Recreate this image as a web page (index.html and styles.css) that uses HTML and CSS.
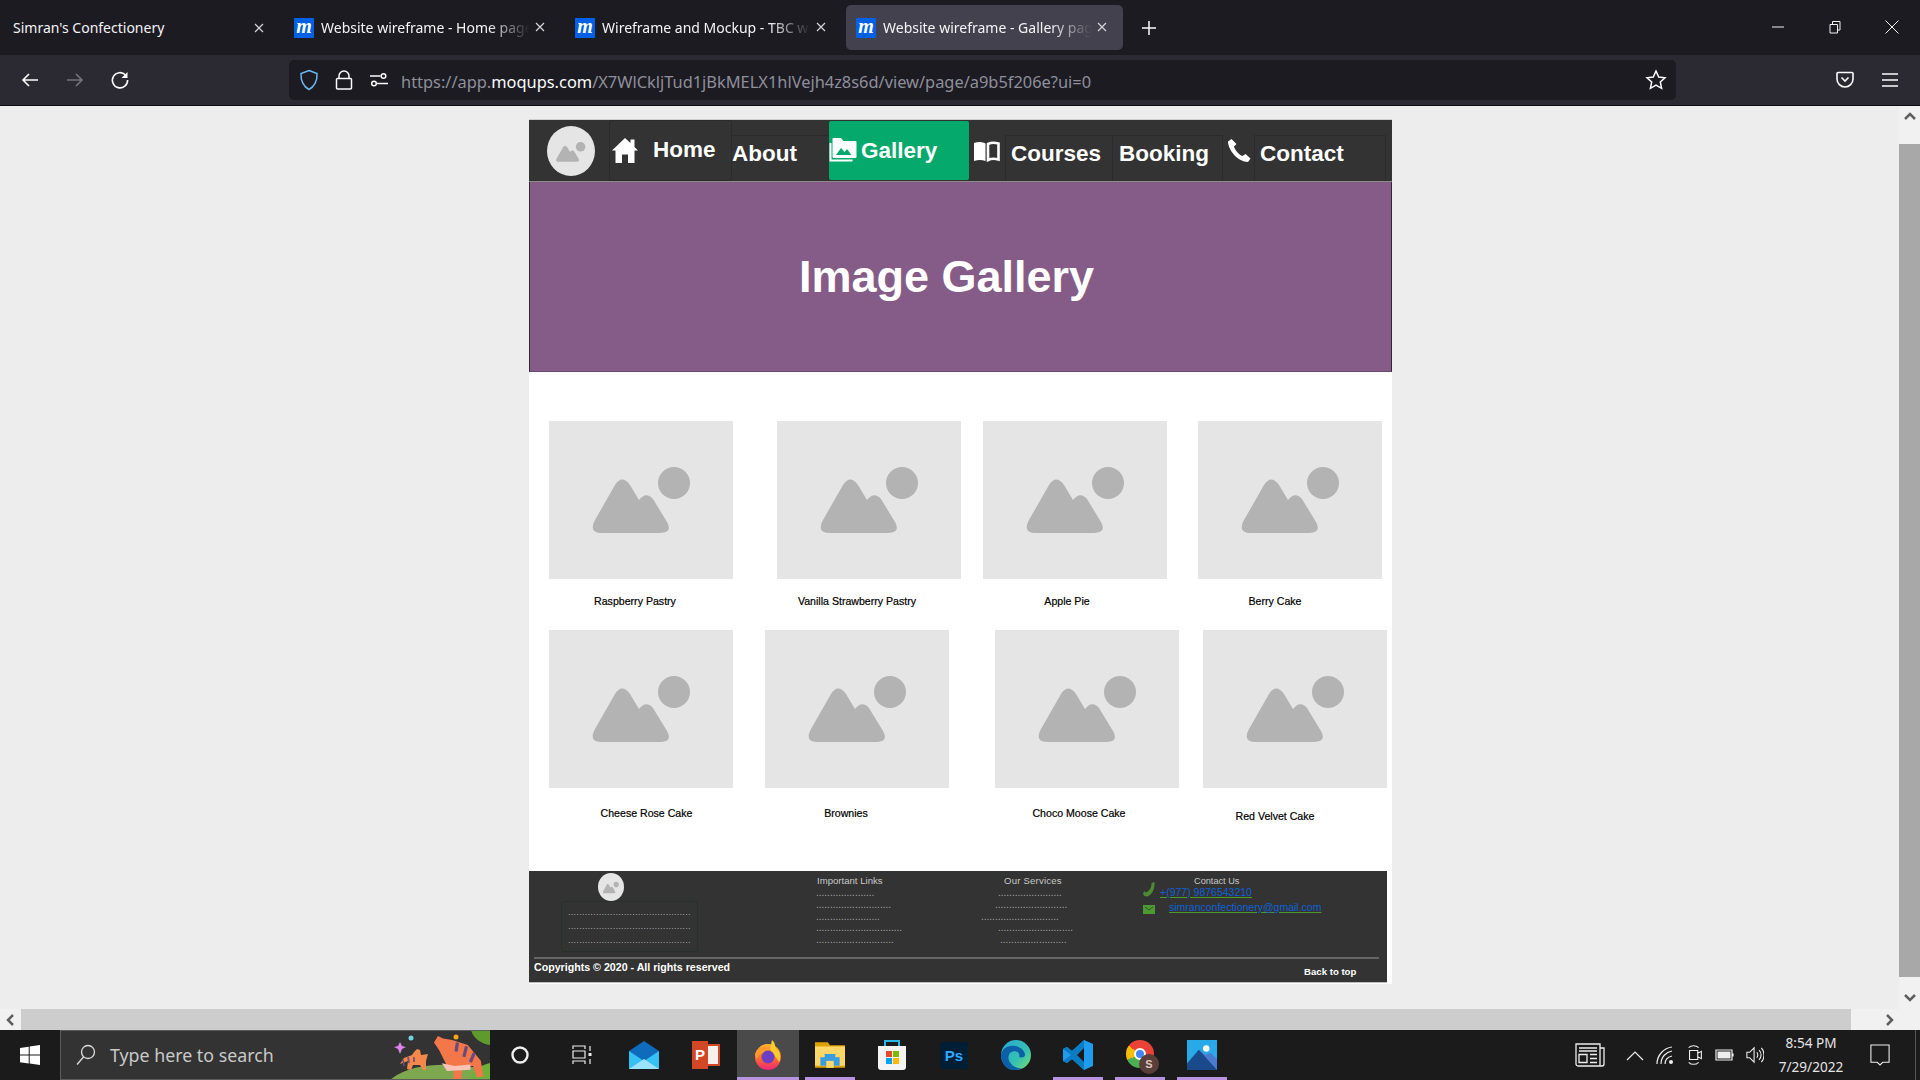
FILE: index.html
```html
<!DOCTYPE html>
<html lang="en">
<head>
<meta charset="utf-8">
<title>Website wireframe - Gallery page</title>
<link rel="stylesheet" href="styles.css">
</head>
<body>
<svg class="defs" width="0" height="0" aria-hidden="true">
  <defs>
    <g id="ph">
      <path d="M53 112Q39 112 46 99L66 64Q73 53 81 64L90 79Q97 70 104 78L118 101Q124 112 111 112Z" fill="#b3b3b3"/>
      <circle cx="125" cy="62" r="16" fill="#b3b3b3"/>
    </g>
    <linearGradient id="edgeG" x1="0" y1="0" x2="1" y2="1"><stop offset="0" stop-color="#2aa7d8"/><stop offset=".6" stop-color="#35c1b0"/><stop offset="1" stop-color="#7fe06a"/></linearGradient>
    <linearGradient id="ffG" x1="0" y1="0" x2="0" y2="1"><stop offset="0" stop-color="#ffb62e"/><stop offset=".55" stop-color="#ff6a2b"/><stop offset="1" stop-color="#f0247c"/></linearGradient>
  </defs>
</svg>

<header class="tabs">
  <div class="tab tab-first">
    <span class="tab-title">Simran's Confectionery</span>
    <svg class="tab-x" viewBox="0 0 12 12"><path d="M2 2l8 8M10 2l-8 8"/></svg>
  </div>
  <div class="tab tab-second">
    <span class="fav">m</span>
    <span class="tab-title fade">Website wireframe - Home page</span>
    <svg class="tab-x" viewBox="0 0 12 12"><path d="M2 2l8 8M10 2l-8 8"/></svg>
  </div>
  <div class="tab tab-third">
    <span class="fav">m</span>
    <span class="tab-title fade">Wireframe and Mockup - TBC wireframe</span>
    <svg class="tab-x" viewBox="0 0 12 12"><path d="M2 2l8 8M10 2l-8 8"/></svg>
  </div>
  <div class="tab tab-active">
    <span class="fav">m</span>
    <span class="tab-title fade">Website wireframe - Gallery page</span>
    <svg class="tab-x" viewBox="0 0 12 12"><path d="M2 2l8 8M10 2l-8 8"/></svg>
  </div>
  <svg class="tab-plus" viewBox="0 0 16 16"><path d="M8 1v14M1 8h14"/></svg>
  <div class="win">
    <svg class="win-i" viewBox="0 0 14 14"><path d="M1 7h12"/></svg>
    <svg class="win-i" viewBox="0 0 14 14"><path d="M2 4.500h7.500V13H2zM4.500 4.500V1.500H12V10H9.500"/></svg>
    <svg class="win-i" viewBox="0 0 14 14"><path d="M0.500 0.500l13 13M13.500 0.500l-13 13"/></svg>
  </div>
</header>

<nav class="toolbar">
  <svg class="tb tb-first" viewBox="0 0 20 20"><path d="M18 10H3M9 4l-6 6 6 6"/></svg>
  <svg class="tb tb-dim" viewBox="0 0 20 20"><path d="M2 10h15M11 4l6 6-6 6"/></svg>
  <svg class="tb" viewBox="0 0 20 20"><path d="M15.500 5A7.600 7.600 0 1 0 17.600 10"/><path class="solid" d="M17.500 2v6h-6z"/></svg>
  <div class="urlbar">
    <svg class="ub" viewBox="0 0 20 22"><path class="shield" d="M10 1.500L18 4.500C18.500 12 15 18 10 20.500 5 18 1.500 12 2 4.500Z"/></svg>
    <svg class="ub" viewBox="0 0 20 22"><path d="M5 9.500V7a5 5 0 0 1 10 0v2.500M3.500 9.500h13a1 1 0 0 1 1 1V19a1 1 0 0 1-1 1h-13a1 1 0 0 1-1-1v-8.500a1 1 0 0 1 1-1z"/></svg>
    <svg class="ub" viewBox="0 0 20 22"><circle cx="14.500" cy="7" r="2.300"/><circle cx="5" cy="14.500" r="2.300"/><path d="M1 7h10.500M8 14.500h11"/></svg>
    <div class="url">https://app.<b>moqups.com</b>/X7WlCkljTud1jBkMELX1hlVejh4z8s6d/view/page/a9b5f206e?ui=0</div>
    <svg class="star" viewBox="0 0 22 22"><path d="M11 2l2.700 6 6.300.7-4.700 4.300 1.300 6.400L11 16.200 5.400 19.400l1.300-6.400L2 8.700 8.300 8z"/></svg>
  </div>
  <svg class="tb tb-pocket" viewBox="0 0 20 20"><path d="M3 2.500h14a1 1 0 0 1 1 1V9a8 8 0 0 1-16 0V3.500a1 1 0 0 1 1-1z"/><path d="M6.500 7.500L10 11l3.500-3.500"/></svg>
  <svg class="tb tb-menu" viewBox="0 0 20 20"><path d="M2 4h16M2 10h16M2 16h16"/></svg>
</nav>

<main class="view">
  <div class="view-main">
    <div class="stage">
      <div class="page">
        <div class="sitenav">
          <div class="logo">
            <svg class="logo-svg" viewBox="13 -4 160 160"><use href="#ph"/></svg>
          </div>
          <div class="ni ni-home">
            <svg class="ic ic-home" viewBox="0 0 26 25"><path d="M13 0L0 12.500h3.500V25h6.500v-8.500h6V25h6.500V12.500H26l-3.500-3.500V1.500h-4v3.500z"/></svg>
            <span class="nt">Home</span>
          </div>
          <div class="ni ni-about"><span class="nt">About</span></div>
          <div class="ni ni-gallery">
            <svg class="ic ic-gal" viewBox="0 0 28 26"><path class="ol" d="M1.500 6v17.500h22"/><path d="M4.500 1h7.500l2.500 3h12a1 1 0 0 1 1 1v15a1 1 0 0 1-1 1H4.500a1 1 0 0 1-1-1V2a1 1 0 0 1 1-1z"/><path class="cut" d="M7 18l5-7 3.500 4 2.500-3 4.500 6z"/></svg>
            <span class="nt">Gallery</span>
          </div>
          <div class="ni ni-bookslot">
            <svg class="ic ic-book" viewBox="0 0 27 21"><path d="M1 2C5 .5 9 .5 12.500 2.500V20C9 18.500 5 18.500 1 20z"/><path class="ol ol-thick" d="M15 3C18 1.500 22 1.500 25.500 2.500v16c-3.500-1-7.500-1-10.500.5z"/></svg>
          </div>
          <div class="ni ni-courses"><span class="nt">Courses</span></div>
          <div class="ni ni-booking"><span class="nt">Booking</span></div>
          <div class="ni ni-phoneslot">
            <svg class="ic ic-phone" viewBox="0 0 24 25"><path d="M4.500 1L1 3.500C1 12 11 24 21 24l2.500-3.500-5-4.500-3 2C12 17 7.500 11.500 7 8.500l2.500-2.500z"/></svg>
          </div>
          <div class="ni ni-contact"><span class="nt">Contact</span></div>
        </div>

        <section class="banner"><h1>Image Gallery</h1></section>

        <section class="gallery">
          <div class="row row-a">
            <figure class="card">
              <svg class="pic" viewBox="0 0 184 158"><use href="#ph"/></svg>
              <figcaption class="cap cap-1">Raspberry Pastry</figcaption>
            </figure>
            <figure class="card g44">
              <svg class="pic" viewBox="0 0 184 158"><use href="#ph"/></svg>
              <figcaption class="cap cap-2">Vanilla Strawberry Pastry</figcaption>
            </figure>
            <figure class="card g22">
              <svg class="pic" viewBox="0 0 184 158"><use href="#ph"/></svg>
              <figcaption class="cap cap-3">Apple Pie</figcaption>
            </figure>
            <figure class="card g31">
              <svg class="pic" viewBox="0 0 184 158"><use href="#ph"/></svg>
              <figcaption class="cap cap-4">Berry Cake</figcaption>
            </figure>
          </div>
          <div class="row row-b">
            <figure class="card">
              <svg class="pic" viewBox="0 0 184 158"><use href="#ph"/></svg>
              <figcaption class="cap cap-5">Cheese Rose Cake</figcaption>
            </figure>
            <figure class="card g32">
              <svg class="pic" viewBox="0 0 184 158"><use href="#ph"/></svg>
              <figcaption class="cap cap-6">Brownies</figcaption>
            </figure>
            <figure class="card g46">
              <svg class="pic" viewBox="0 0 184 158"><use href="#ph"/></svg>
              <figcaption class="cap cap-7">Choco Moose Cake</figcaption>
            </figure>
            <figure class="card g24">
              <svg class="pic" viewBox="0 0 184 158"><use href="#ph"/></svg>
              <figcaption class="cap cap-8">Red Velvet Cake</figcaption>
            </figure>
          </div>
        </section>

        <footer class="foot">
          <div class="foot-top">
            <div class="f-brand">
              <svg class="f-logo" viewBox="13 -4 160 160" preserveAspectRatio="none"><use href="#ph"/></svg>
              <div class="f-box">
                <div class="dots">............................................</div>
                <div class="dots">............................................</div>
                <div class="dots">............................................</div>
              </div>
            </div>
            <div class="f-links">
              <div class="f-title t-links">Important Links</div>
              <div class="dl">.....................</div>
              <div class="dl">...........................</div>
              <div class="dl">.......................</div>
              <div class="dl">...............................</div>
              <div class="dl">............................</div>
            </div>
            <div class="f-services">
              <div class="f-title t-serv">Our Services</div>
              <div class="dl s1">.......................</div>
              <div class="dl s2">..........................</div>
              <div class="dl">............................</div>
              <div class="dl s1">...........................</div>
              <div class="dl s3">........................</div>
            </div>
            <div class="f-contact">
              <div class="f-title t-cont">Contact Us</div>
              <div class="c-row">
                <svg class="c-phone" viewBox="0 0 12 15"><path d="M11.500 0L8.500 1C9 5 6 10 2.500 10.500L1 9 0 12.500C2 15 5 15 7.500 12.500 10.500 9.500 12 5 11.500 0z"/></svg>
                <a class="c-link l-tel" href="#">+(977) 9876543210</a>
              </div>
              <div class="c-row">
                <svg class="c-mail" viewBox="0 0 12 9"><path d="M0 0h12v9H0z"/><path class="flap" d="M2 2l4 3 4-3"/></svg>
                <a class="c-link l-mail" href="#">simranconfectionery@gmail.com</a>
              </div>
            </div>
          </div>
          <div class="foot-hr"></div>
          <div class="foot-bottom">
            <span class="copy">Copyrights © 2020 - All rights reserved</span>
            <a class="back" href="#">Back to top</a>
          </div>
        </footer>
      </div>
    </div>
    <aside class="vscroll">
      <svg class="sa sa-up" viewBox="0 0 12 8"><path d="M1 7l5-5 5 5"/></svg>
      <div class="vthumb"></div>
      <svg class="sa sa-down" viewBox="0 0 12 8"><path d="M1 1l5 5 5-5"/></svg>
    </aside>
  </div>
  <div class="hscroll">
    <svg class="sb" viewBox="0 0 8 12"><path d="M7 1L2 6l5 5"/></svg>
    <div class="hthumb"></div>
    <svg class="sb" viewBox="0 0 8 12"><path d="M1 1l5 5-5 5"/></svg>
  </div>
</main>

<footer class="taskbar">
  <div class="start">
    <svg class="winlogo" viewBox="0 0 20 20"><path d="M0 2.900L8.700 1.700v7.900H0zM9.700 1.500L20 0v9.600H9.700zM0 10.500h8.700v7.900L0 17.200zM9.700 10.500H20V20L9.700 18.600z"/></svg>
  </div>
  <div class="search">
    <svg class="mag" viewBox="0 0 20 22"><circle cx="12" cy="8" r="6.500"/><path d="M7.500 13L1 20.500"/></svg>
    <span class="search-t">Type here to search</span>
    <svg class="tiger" viewBox="0 0 100 50">
      <path d="M0 50C15 37 40 34 62 35 80 36 92 38 100 42V50Z" fill="#7ea84f"/>
      <path d="M81 0h19v15C91 14 83 8 81 0z" fill="#5f9a2c"/>
      <path d="M80 50c0-8 8-14 20-17v17z" fill="#6fb03a"/>
      <path d="M10 12l2 4 4 1-4 2-2 5-2-5-4-2 4-1z" fill="#dd83ee"/>
      <circle cx="21" cy="8" r="2.500" fill="#6fd5dc"/>
      <circle cx="66" cy="7" r="2.500" fill="#f5a90a"/>
      <g transform="translate(44 6) scale(1.300) translate(-44 -9)">
        <path d="M44 14l3-5 4 2 7 1 12 4 10 12 2 12-5 1-3-9-8 0-1 10-6 0 0-8-5-2-6-12z" fill="#f4774a"/>
        <path d="M62 14l-1 7M69 17l-2 8M75 22l-3 7" stroke="#6a4b7e" stroke-width="2.500" fill="none"/>
        <path d="M50 30l10 2 12-1 0 4-18 1z" fill="#f9c4b5"/>
      </g>
      <path d="M24 22l3-3 3 1 1 5 7-1-2 7 0 9-3 0-3-5-7 0-2 5-4-1 1-8-8 3 4-6 8-3z" fill="#f4874a"/>
      <path d="M13 30l1 6M18 27l1 6M24 27l0 5" stroke="#6a4b7e" stroke-width="1.600" fill="none"/>
    </svg>
  </div>
  <div class="slot slot-cortana"><svg class="t-i" viewBox="0 0 20 20"><circle class="thick" cx="10" cy="10" r="7.500"/></svg></div>
  <div class="slot slot-task"><svg class="t-i" viewBox="0 0 20 20"><path d="M1 4V1h12v3M1 6h12v7H1zM1 19v-3h12v3M18 1v5M18 14v5"/><path class="solid" d="M16.500 8h3v3h-3z"/></svg></div>
  <div class="slot">
    <svg class="t-c" viewBox="0 0 30 28"><path d="M15 0L30 10V28H0V10z" fill="#0f6cbd"/><path d="M0 10L15 20 30 10V28H0z" fill="#37c0f5"/><path d="M0 28L15 18 30 28z" fill="#9be3fa"/></svg>
  </div>
  <div class="slot">
    <div class="ppt"><span class="ppt-page"></span><span class="ppt-p">P</span></div>
  </div>
  <div class="slot active full">
    <svg class="t-c" viewBox="0 0 30 30"><circle cx="15" cy="17" r="13" fill="url(#ffG)"/><path d="M19 0c4 3 2 6 5 9 4 4 4 10 2 13L17 9z" fill="#ffc92e"/><circle cx="15" cy="17" r="6.500" fill="#6b3fc4"/><path d="M2 15C3 9 10 5 18 8c-5 0-7 2-8 5-3 0-5 2-6 6z" fill="#ff9a2b"/></svg>
  </div>
  <div class="slot active">
    <svg class="t-c" viewBox="0 0 28 24"><path d="M0 0h12l2 3h14v21H0z" fill="#e0a100"/><path d="M0 4h28v18H0z" fill="#ffd766"/><path d="M5 22v-8h4v-3h10v3h4v8z" fill="#3a9de0"/><path d="M10.500 17.500h7V24h-7z" fill="#ffd766"/></svg>
  </div>
  <div class="slot">
    <svg class="t-c" viewBox="0 0 30 30"><path d="M1 6h28v21a3 3 0 0 1-3 3H4a3 3 0 0 1-3-3z" fill="#f4f4f4"/><path d="M8 6V1h14v5" fill="none" stroke="#29b6e8" stroke-width="2"/><path d="M9 11h6v6H9z" fill="#e8482c"/><path d="M16 11h6v6h-6z" fill="#7fba00"/><path d="M9 18h6v6H9z" fill="#00a4ef"/><path d="M16 18h6v6h-6z" fill="#ffb900"/></svg>
  </div>
  <div class="slot"><div class="ps">Ps</div></div>
  <div class="slot">
    <svg class="t-c" viewBox="0 0 30 30"><circle cx="15" cy="15" r="15" fill="url(#edgeG)"/><path d="M0 15C1 8 8 5 14 6c6 1 10 5 10 9 0 2-3 3-6 2 2-5-5-8-9-4-4 5 0 13 8 15 2 .5 3 .5 5 0-4 2-7 2-10 2C5 30 0 23 0 15z" fill="#0d5fa8"/></svg>
  </div>
  <div class="slot active">
    <svg class="t-c" viewBox="0 0 30 30"><path d="M21 0l9 4v22l-9 4-12-11-5 4-4-2V9l4-2 5 4z" fill="#1f9cf0"/><path d="M21 0v30L9 19l-5 4-4-2 8-6-8-6 4-2 5 4z" fill="#0a7cc4"/><path d="M21 8l-7 7 7 7z" fill="#1a1a1a"/></svg>
  </div>
  <div class="slot active">
    <div class="chrome"><span class="chrome-in"></span><span class="avatar">S</span></div>
  </div>
  <div class="slot active">
    <svg class="t-c" viewBox="0 0 28 28"><path d="M0 0h28v28H0z" fill="#29aae8"/><circle cx="18" cy="8" r="3" fill="#fff"/><path d="M0 22L11 9l17 15v4H0z" fill="#1a4a8c"/><path d="M11 9l6 5 5-2 6 6v10L11 9z" fill="#4a7bd0"/></svg>
  </div>
  <div class="tray">
    <svg class="tr tr-news" viewBox="0 0 30 24"><path d="M1 1h24v22H3a2 2 0 0 1-2-2zM25 5h4v16a2 2 0 0 1-2 2h-2M4 5h18M4 8h18M4 11.500h8v8H4zM15 11.500h7M15 15.500h7M15 19.500h7"/></svg>
    <div class="tr-slot"><svg class="tr" viewBox="0 0 18 12"><path d="M1 11l8-8 8 8"/></svg></div>
    <div class="tr-slot"><svg class="tr" viewBox="0 0 18 20"><path d="M1 19C1 10 8 3 16 2M5 19C5 12 10 7 16 6M9 19c0-4 3-7 7-8"/><circle class="solid" cx="15" cy="17" r="2"/></svg></div>
    <div class="tr-slot"><svg class="tr" viewBox="0 0 18 22"><path d="M3 6h9v10H3zM12 9l4-2v8l-4-2M2 3C5 0 10 0 13 3M2 19c3 3 8 3 11 0"/></svg></div>
    <div class="tr-slot"><svg class="tr tr-bat" viewBox="0 0 20 12"><path d="M1 1h16v10H1zM18 4.500v3"/><path class="solid" d="M2.500 2.500h13v7h-13z"/></svg></div>
    <div class="tr-slot"><svg class="tr" viewBox="0 0 20 20"><path d="M1 7h3l5-5v16l-5-5H1zM12 7c1.500 2 1.500 4 0 6M14.500 4.500c3 3 3 8 0 11M17 2c4 4 4 12 0 16"/></svg></div>
    <div class="clock"><span>8:54 PM</span><span>7/29/2022</span></div>
    <div class="notif"><svg class="tr tr-note" viewBox="0 0 22 24"><path d="M1 1h20v19h-7l-3 3-3-3H1z"/></svg></div>
    <div class="desk"></div>
  </div>
</footer>
</body>
</html>
```

FILE: styles.css
```css
* { box-sizing: border-box; }
html, body { margin: 0; height: 100%; }
body {
  width: 1920px; height: 1080px; overflow: hidden;
  display: flex; flex-direction: column;
  font-family: "Liberation Sans", Arial, sans-serif;
  background: #ededed;
}
.defs { display: block; height: 0; }
svg { display: block; flex: none; }

/* browser tab strip */
.tabs { height: 55px; flex: none; background: #1c1b22; display: flex; align-items: center; color: #fbfbfe; }
.tab { height: 45px; display: flex; align-items: center; position: relative; }
.tab-first { width: 279px; padding-left: 13px; }
.tab-second { width: 281px; padding-left: 15px; }
.tab-third { width: 286px; padding-left: 15px; }
.tab-active { width: 277px; padding-left: 10px; background: #42414d; border-radius: 5px; }
.tab-title { font: 14px/20px "Noto Sans", "Open Sans", sans-serif; white-space: nowrap; overflow: hidden; flex: none; color: #f4f4f6; margin-top: 1px; }
.tab-first .tab-title { width: 236px; }
.tab-second .tab-title, .tab-third .tab-title, .tab-active .tab-title { width: 209px; margin-left: 7px; }
.fade { -webkit-mask-image: linear-gradient(90deg, #000 80%, transparent 100%); mask-image: linear-gradient(90deg, #000 80%, transparent 100%); }
.fav { width: 20px; height: 20px; flex: none; background: #0060e6; color: #fff; font: italic 700 20px/17px "Liberation Serif", serif; text-align: center; }
.tab-x { width: 12px; height: 12px; margin-left: 4px; fill: none; stroke: #d5d5d9; stroke-width: 1.200; }
.tab-second .tab-x, .tab-third .tab-x, .tab-active .tab-x { margin-top: -2px; }
.tab-plus { width: 16px; height: 16px; margin-left: 18px; fill: none; stroke: #fbfbfe; stroke-width: 1.500; }
.win { margin-left: auto; display: flex; gap: 43px; padding-right: 21px; margin-top: -1px; }
.win-i { width: 14px; height: 14px; fill: none; stroke: #f0f0f0; stroke-width: 1; }

/* browser toolbar */
.toolbar { height: 51px; flex: none; background: #2b2a33; border-bottom: 1px solid #0c0c0d; display: flex; align-items: center; padding-left: 20px; }
.tb { width: 20px; height: 20px; margin-right: 25px; fill: none; stroke: #fbfbfe; stroke-width: 1.600; }
.tb .solid { fill: #fbfbfe; stroke: none; }
.tb-dim { stroke: #74737a; }
.urlbar { width: 1387px; height: 40px; margin-left: 134px; background: #1c1b22; border-radius: 5px; display: flex; align-items: center; padding-left: 10px; flex: none; }
.ub { width: 20px; height: 22px; margin-right: 15px; fill: none; stroke: #fbfbfe; stroke-width: 1.500; }
.ub .shield { stroke: #6bb8f2; }
.url { font: 16.400px/20px "Noto Sans", "Open Sans", sans-serif; color: #8f8f9a; white-space: nowrap; width: 1244px; margin: 3px 0 0 -3px; }
.url b { font-weight: 400; color: #fbfbfe; }
.star { width: 22px; height: 22px; fill: none; stroke: #fbfbfe; stroke-width: 1.500; }
.tb-pocket { margin-left: 159px; margin-right: 0; }
.tb-menu { margin-left: 25px; margin-right: 0; stroke-width: 1.500; }

/* viewport */
.view { flex: 1; display: flex; flex-direction: column; min-height: 0; }
.view-main { flex: 1; display: flex; min-height: 0; }
.stage { flex: 1; min-width: 0; overflow: hidden; padding: 13px 0 0 529px; background: #ededed; }
.page { width: 863px; height: 865px; background: #fff; border-top: 1px solid #cfcfcf; display: flex; flex-direction: column; }

.vscroll { width: 21px; background: #f1f1f1; display: flex; flex-direction: column; align-items: center; }
.sa { width: 12px; height: 8px; fill: none; stroke: #5f5f5f; stroke-width: 2.500; }
.sa-up { margin: 6px 0 24px; }
.sa-down { margin: 17px 0 7px; }
.vthumb { width: 21px; flex: 1; background: #a8a8a8; }
.hscroll { height: 21px; flex: none; background: #f1f1f1; display: flex; align-items: center; padding-left: 6px; }
.sb { width: 8px; height: 12px; fill: none; stroke: #5f5f5f; stroke-width: 2.500; }
.hthumb { width: 1830px; height: 21px; background: #cdcdcd; margin: 0 35px 0 7px; }

/* site nav */
.sitenav { height: 62px; flex: none; background: #333; border-bottom: 1px solid #8a8a8a; display: flex; align-items: flex-end; padding-left: 18px; color: #fff; }
.logo { width: 48px; height: 50px; background: #e5e5e5; border-radius: 50%; margin: 0 14px 5px 0; overflow: hidden; flex: none; }
.logo-svg { width: 48px; height: 50px; }
.ni { display: flex; flex: none; }
.nt { font: 700 22.500px/26px "Liberation Sans", Arial, sans-serif; white-space: nowrap; }
.ic { fill: #fff; }
.ic .ol { fill: none; stroke: #fff; stroke-width: 2; }
.ic .ol-thick { stroke-width: 2.600; }
.ic .cut { fill: #05a96c; }
.ni-home { width: 123px; height: 61px; border: 1px solid #2b2b2b; border-radius: 2px; padding: 17px 0 0 2px; }
.ic-home { width: 26px; height: 25px; }
.ni-home .nt { margin-left: 15px; margin-top: -1px; }
.ni-about { width: 97px; height: 46px; border-top: 1px solid #2b2b2b; padding: 5px 0 0 0; }
.ni-gallery { width: 140px; height: 59px; margin-bottom: 1px; background: #05a96c; border-radius: 2px; padding-top: 16px; }
.ic-gal { width: 28px; height: 26px; }
.ni-gallery .nt { margin-left: 4px; margin-top: 1px; }
.ni-bookslot { width: 36px; height: 46px; padding: 6px 0 0 4px; }
.ic-book { width: 27px; height: 21px; }
.ni-courses { width: 108px; height: 46px; border: 1px solid #2b2b2b; border-bottom: 0; border-radius: 2px 2px 0 0; padding: 5px 0 0 5px; }
.ni-booking { width: 110px; height: 46px; border: 1px solid #2b2b2b; border-bottom: 0; border-left: 0; border-radius: 2px 2px 0 0; padding: 5px 0 0 6px; }
.ni-phoneslot { width: 31px; height: 46px; padding: 3px 0 0 4px; }
.ic-phone { width: 24px; height: 25px; }
.ni-contact { width: 132px; height: 46px; border: 1px solid #2b2b2b; border-bottom: 0; border-radius: 2px 2px 0 0; padding: 5px 0 0 5px; }

/* banner */
.banner { height: 190px; flex: none; background: #845c87; border: 1px solid #33283a; border-top: 0; border-bottom: 1px solid #6a4a6e; display: flex; align-items: center; justify-content: center; padding-right: 28px; }
.banner h1 { margin: 0; color: #fff; font: 700 45px/52px "Liberation Sans", Arial, sans-serif; }

/* gallery */
.gallery { height: 499px; flex: none; padding: 49px 0 0 20px; }
.row { display: flex; }
.row-a { height: 209px; }
.card { margin: 0; width: 184px; flex: none; }
.pic { width: 184px; height: 158px; background: #e5e5e5; }
.g44 { margin-left: 44px; }
.g22 { margin-left: 22px; }
.g31 { margin-left: 31px; }
.g32 { margin-left: 32px; }
.g46 { margin-left: 46px; }
.g24 { margin-left: 24px; }
.cap { font: 400 10.600px/16px "Liberation Sans", Arial, sans-serif; color: #000; text-align: center; white-space: nowrap; margin-top: 14px; -webkit-text-stroke: .2px #000; }
.row-b .cap { margin-top: 17px; }
.cap-1 { padding-right: 12px; }
.cap-2 { padding-right: 24px; }
.cap-3 { padding-right: 16px; }
.cap-4 { padding-right: 30px; }
.cap-5 { padding-left: 11px; }
.cap-6 { padding-right: 22px; }
.cap-7 { padding-right: 16px; }
.row-b .cap-8 { padding-right: 40px; margin-top: 20px; }

/* footer */
.foot { width: 858px; height: 112px; flex: none; background: #333; display: flex; flex-direction: column; color: #ccc; border-bottom: 1px solid #bdbdbd; }
.foot-top { height: 86px; flex: none; display: flex; }
.f-brand { width: 137px; margin-left: 32px; flex: none; padding-top: 2px; }
.f-logo { width: 26px; height: 28px; margin-left: 37px; background: #e5e5e5; border-radius: 50%; }
.f-box { height: 51px; border: 1px solid #293029; border-radius: 2px; padding: 3px 0 0 6px; overflow: hidden; }
.dots { font: 400 9.500px/14px "Liberation Sans", Arial, sans-serif; letter-spacing: .15px; color: #a8a8a8; white-space: nowrap; width: 123px; }
.f-title { font: 400 9.600px/12px "Liberation Sans", Arial, sans-serif; color: #c8c8c8; white-space: nowrap; margin-top: 4px; }
.dl { font: 400 10px/11.750px "Liberation Sans", Arial, sans-serif; color: #a6a6a6; white-space: nowrap; height: 11.750px; }
.f-links { width: 120px; margin-left: 118px; flex: none; }
.t-links { padding-left: 1px; }
.f-services { width: 100px; margin-left: 45px; flex: none; }
.t-serv { padding-left: 23px; letter-spacing: .2px; }
.s1 { margin-left: 17px; }
.s2 { margin-left: 14px; }
.s3 { margin-left: 19px; }
.f-contact { width: 200px; margin-left: 62px; flex: none; }
.t-cont { padding-left: 51px; font-size: 9.200px; margin-bottom: -2px; }
.c-row { display: flex; height: 14px; }
.c-row + .c-row { margin-top: 1px; }
.c-phone { width: 12px; height: 15px; margin-top: -3px; fill: #4c8a32; }
.c-mail { width: 12px; height: 9px; margin-top: 5px; fill: #4c9a32; }
.c-mail .flap { fill: none; stroke: #2e5a20; stroke-width: 1; }
.c-link { font: 400 10.500px/14px "Liberation Sans", Arial, sans-serif; color: #0d62d8; text-decoration: underline; text-decoration-color: #4c9a2a; white-space: nowrap; }
.l-tel { margin-left: 5px; }
.l-mail { margin-left: 14px; }
.foot-hr { height: 2px; flex: none; margin: 0 8px 0 5px; background: #666; }
.foot-bottom { flex: 1; display: flex; padding-left: 5px; }
.copy { font: 700 10.650px/14px "Liberation Sans", Arial, sans-serif; color: #fff; white-space: nowrap; margin-top: 1px; }
.back { font: 700 9.600px/14px "Liberation Sans", Arial, sans-serif; color: #fff; text-decoration: none; white-space: nowrap; margin-left: 574px; margin-top: 6px; }

/* taskbar */
.taskbar { height: 50px; flex: none; background: #1b1b1b; display: flex; align-items: stretch; color: #fff; }
.start { width: 60px; display: flex; align-items: center; padding-left: 20px; flex: none; }
.winlogo { width: 20px; height: 20px; fill: #fff; }
.search { width: 430px; flex: none; background: #333; border: 1px solid #5c5c5c; border-width: 1px 0 1px 1px; display: flex; align-items: center; padding-left: 15px; overflow: hidden; }
.mag { width: 20px; height: 22px; fill: none; stroke: #ddd; stroke-width: 1.300; }
.search-t { font: 400 17.800px/24px "Noto Sans", "Open Sans", sans-serif; color: #c9c9c9; margin-left: 14px; width: 280px; white-space: nowrap; flex: none; }
.tiger { width: 100px; height: 50px; flex: none; }
.slot { width: 62px; flex: none; display: flex; align-items: center; justify-content: center; position: relative; }
.slot-cortana { width: 60px; }
.slot-task { width: 63px; }
.t-i { width: 20px; height: 20px; fill: none; stroke: #eee; stroke-width: 1.200; }
.t-i .thick { stroke-width: 2.400; }
.t-i .solid { fill: #eee; stroke: none; }
.t-c { width: 30px; height: 30px; }
.active::after { content: ""; position: absolute; left: 6px; right: 6px; bottom: 0; height: 3px; background: #b793e0; }
.full { background: #4a4a4a; }
.full::after { left: 0; right: 0; }
.ppt { width: 28px; height: 28px; position: relative; }
.ppt-page { display: block; width: 16px; height: 22px; margin: 3px 0 0 12px; background: #f4f0ec; border: 2px solid #d24726; }
.ppt-p { position: absolute; left: 0; top: 0; width: 16px; height: 28px; background: #d24726; color: #fff; font: 700 15px/28px "Liberation Sans", sans-serif; text-align: center; }
.ps { width: 28px; height: 27px; background: #001e36; border-radius: 3px; color: #31a8ff; font: 700 15px/27px "Liberation Sans", sans-serif; text-align: center; }
.chrome { width: 28px; height: 28px; border-radius: 50%; background: conic-gradient(#ea4335 0 35%, #4caf50 35% 68%, #fbbc05 68% 85%, #ea4335 85%); position: relative; margin-top: -3px; display: flex; align-items: center; justify-content: center; }
.chrome-in { width: 12px; height: 12px; border-radius: 50%; background: #4285f4; border: 2px solid #fff; }
.avatar { position: absolute; right: -5px; bottom: -6px; width: 20px; height: 20px; border-radius: 50%; background: #5a3f38; color: #d9c9c2; font: 700 11px/20px "Liberation Sans", sans-serif; text-align: center; }
.tray { margin-left: auto; display: flex; align-items: center; width: 345px; flex: none; }
.tr { width: 18px; height: 20px; fill: none; stroke: #eee; stroke-width: 1.200; }
.tr .solid { fill: #eee; stroke: none; }
.tr-news { width: 30px; height: 24px; margin-right: 15px; stroke-width: 1.300; }
.tr-slot { width: 30px; display: flex; justify-content: center; }
.tr-bat { width: 20px; height: 12px; }
.clock { width: 82px; display: flex; flex-direction: column; align-items: center; gap: 4px; font: 400 13.600px/20px "Noto Sans", "Open Sans", sans-serif; color: #e4e4e4; white-space: nowrap; }
.notif { width: 56px; display: flex; justify-content: center; }
.tr-note { width: 20px; height: 24px; }
.desk { width: 12px; height: 50px; background: linear-gradient(90deg, #1b1b1b 7px, #555 7px, #555 8px, #1b1b1b 8px); }
```
